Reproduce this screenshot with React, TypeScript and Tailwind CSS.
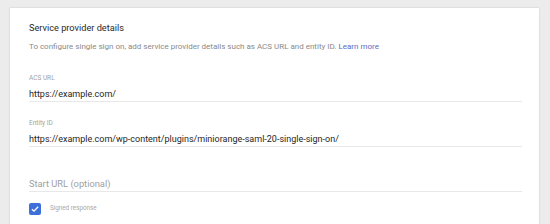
import React from 'react';

// ── Underlined field ──
function Field({ label, value, placeholder }: { label?: string; value?: string; placeholder?: string }) {
    return (
        <div className="flex flex-col">
            {label && <span className="text-[6.5px] leading-[8px] text-[#a3a3a3]">{label}</span>}
            <div
                className={
                    'border-b border-[#e8e8e8] pb-[1px] leading-[12px] ' +
                    (label ? 'mt-[6px] text-[9px] ' : 'text-[9.3px] ') +
                    (value ? 'text-[#262626]' : 'text-[#a0a0a0]')
                }
            >
                {value || placeholder}
            </div>
        </div>
    );
}

export default function App() {
    return (
        <div
            className="w-[550px] h-[224px] overflow-hidden bg-[#ececec] pt-[8px] pl-[10px] pr-[11px]"
            style={{ fontFamily: 'Roboto, "Liberation Sans", sans-serif' }}
        >
            <div className="h-[240px] bg-white shadow-[0_0_2px_rgba(0,0,0,0.15)] pl-[19px] pr-[17px] pt-[14px]">
                <h2 className="text-[9.2px] leading-[12px] text-[#2a2a2a] font-normal">Service provider details</h2>
                <p className="mt-[8px] text-[8px] leading-[10px] text-[#8a8a8a]">
                    To configure single sign on, add service provider details such as ACS URL and entity ID.{' '}
                    <span className="text-[#5c6bc0]">Learn more</span>
                </p>

                <div className="mt-[22px]">
                    <Field label="ACS URL" value="https://example.com/" />
                </div>
                <div className="mt-[17px]">
                    <Field label="Entity ID" value="https://example.com/wp-content/plugins/miniorange-saml-20-single-sign-on/" />
                </div>
                <div className="mt-[31px]">
                    <Field placeholder="Start URL (optional)" />
                </div>

                <div className="mt-[11px] flex items-center gap-[9px]">
                    <span className="flex h-[12px] w-[12px] items-center justify-center rounded-[2px] bg-[#3d6fdb]">
                        <svg viewBox="0 0 12 12" className="h-[10px] w-[10px]">
                            <path d="M2.3 6.2 L4.8 8.6 L9.8 3.4" fill="none" stroke="white" strokeWidth="1.6" />
                        </svg>
                    </span>
                    <span className="text-[6.3px] text-[#a8a8a8]">Signed response</span>
                </div>
            </div>
        </div>
    );
}
